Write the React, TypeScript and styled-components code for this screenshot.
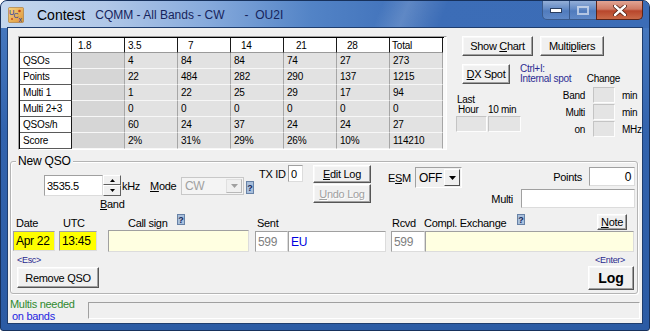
import React from 'react';
import styled, { createGlobalStyle } from 'styled-components';

const GlobalStyle = createGlobalStyle`
  html, body { margin: 0; padding: 0; background: #fff; }
  body { font-family: "Liberation Sans", Arial, sans-serif; }
`;

const Window = styled.div`
  width: 650px;
  height: 331px;
  box-sizing: border-box;
  display: flex;
  flex-direction: column;
  border: 1px solid #17315c;
  border-radius: 7px 7px 3px 3px;
  overflow: hidden;
  background: linear-gradient(180deg, #4a7cc2 0%, #3263ad 40%, #2b5ba4 100%);
  font-family: "Liberation Sans", Arial, sans-serif;
  letter-spacing: -0.3px;
  color: #000;
`;

const TitleBar = styled.div`
  height: 27px;
  flex: none;
  display: flex;
  align-items: center;
  padding-left: 7px;
  background:
    linear-gradient(112deg, transparent 58%, rgba(255,255,255,0.16) 62%, transparent 68%),
    linear-gradient(90deg, #c4d7ee 0%, #b1c8e8 16%, #86aadc 32%, #5283c6 48%, #3c6db7 66%, #3b6cb6 100%);
`;

const TitleMain = styled.span`
  margin-left: 13px;
  font-size: 14px;
  letter-spacing: 0;
  color: #000;
`;

const TitleSub = styled.span`
  margin-left: 10px;
  font-size: 12px;
  letter-spacing: 0;
  color: #16245c;
  white-space: pre;
`;

const Controls = styled.div`
  margin-left: auto;
  margin-right: 6px;
  align-self: flex-start;
  display: flex;
  height: 19px;
`;

const CtlBtn = styled.div<{ $w: number; $close?: boolean }>`
  width: ${p => p.$w}px;
  height: 19px;
  box-sizing: border-box;
  display: flex;
  align-items: center;
  justify-content: center;
  border: 1px solid ${p => (p.$close ? '#5b2418' : '#3a5a8c')};
  border-top: none;
  margin-left: -1px;
  border-radius: ${p => (p.$close ? '0 0 5px 0' : '0')};
  background: ${p =>
    p.$close
      ? 'linear-gradient(180deg, #e2a494 0%, #cf7a64 45%, #b8462c 55%, #c96a48 100%)'
      : 'linear-gradient(180deg, rgba(255,255,255,0.45) 0%, rgba(255,255,255,0.2) 45%, rgba(120,150,200,0.35) 55%, rgba(150,180,225,0.4) 100%)'};
  &:first-child { border-radius: 0 0 0 5px; }
`;

const Client = styled.div`
  flex: 1;
  margin: 0 7px 7px 7px;
  background: #f0f0f0;
  box-shadow: 0 0 0 1px #1e3d6e;
  display: flex;
  flex-direction: column;
`;

/* ---------- top: statistics grid + side panel ---------- */

const TopArea = styled.div`
  flex: none;
  height: 122px;
  box-sizing: border-box;
  padding: 8px 0 0 10px;
  display: flex;
`;

const GridFrame = styled.div`
  width: 429px;
  height: 114px;
  box-sizing: border-box;
  border: 1px solid;
  border-color: #a0a0a0 #fff #fff #a0a0a0;
  background: #fafafa;
`;

const Table = styled.div`
  display: grid;
  grid-template-columns: 52px repeat(7, 53px);
  grid-template-rows: 15px repeat(6, 16px);
  border-top: 1px solid #000;
  border-left: 1px solid #000;
  width: 424px;
  font-size: 10px;
  letter-spacing: -0.2px;
`;

type CellKind = 'head' | 'label' | 'data' | 'empty';

const Cell = styled.div<{ $kind: CellKind; $indent?: number }>`
  box-sizing: border-box;
  padding-left: ${p => p.$indent ?? 3}px;
  display: flex;
  align-items: center;
  white-space: pre;
  background: ${p =>
    p.$kind === 'head' || p.$kind === 'label' ? '#fff' : p.$kind === 'empty' ? '#d6d6d6' : '#e2e2e2'};
  border-right: 1px solid ${p => (p.$kind === 'head' || p.$kind === 'label' ? '#1a1a1a' : '#a6a6a6')};
  border-bottom: 1px solid ${p => (p.$kind === 'label' ? '#5a5a5a' : p.$kind === 'head' ? '#9a9a9a' : '#f7f7f7')};
`;

const SidePanel = styled.div`
  flex: 1;
  display: flex;
  flex-direction: column;
`;

const ButtonRow = styled.div`
  display: flex;
  gap: 7px;
  margin-left: 15px;
`;

const Btn = styled.div<{ $w: number; $h?: number; $bold?: boolean; $off?: boolean }>`
  width: ${p => p.$w}px;
  height: ${p => p.$h ?? 20}px;
  box-sizing: border-box;
  display: flex;
  align-items: center;
  justify-content: center;
  font-size: ${p => (p.$bold ? 14 : 11)}px;
  font-weight: ${p => (p.$bold ? 700 : 400)};
  letter-spacing: ${p => (p.$bold ? '0' : '-0.3px')};
  color: ${p => (p.$off ? '#a0a0a0' : '#000')};
  text-shadow: ${p => (p.$off ? '1px 1px #fff' : 'none')};
  background: #f0f0f0;
  border: 1px solid;
  border-color: #fff #555 #555 #fff;
  box-shadow: inset -1px -1px #a0a0a0, inset 1px 1px #f8f8f8;
  white-space: nowrap;
`;

const DxRow = styled.div`
  display: flex;
  height: 20px;
  margin: 8px 0 0 15px;
`;

const Hint = styled.div`
  margin-left: 10px;
  font-size: 10px;
  line-height: 10px;
  color: #2c2c92;
`;

const ChangeLabel = styled.div`
  margin-left: auto;
  margin-right: 22px;
  align-self: flex-end;
  font-size: 10px;
  line-height: 10px;
`;

const StatsArea = styled.div`
  display: flex;
  margin-top: 3px;
`;

const LastBlock = styled.div`
  display: flex;
  flex-direction: column;
  margin: 8px 0 0 9px;
  font-size: 10px;
  line-height: 10px;
`;

const LastCaption = styled.div<{ $w?: number; $pl?: number }>`
  width: ${p => (p.$w ? `${p.$w}px` : 'auto')};
  padding-left: ${p => p.$pl ?? 0}px;
  box-sizing: border-box;
`;

const CaptionRow = styled.div`
  display: flex;
`;

const BoxRow = styled.div`
  display: flex;
  gap: 1px;
  margin-top: 1px;
`;

const GreyBox = styled.div<{ $w: number }>`
  width: ${p => p.$w}px;
  height: 16px;
  box-sizing: border-box;
  background: #e4e4e4;
  border: 1px solid;
  border-color: #c4c4c4 #fdfdfd #fdfdfd #c4c4c4;
`;

const StatCol = styled.div`
  margin-left: auto;
  display: flex;
  flex-direction: column;
  gap: 1px;
`;

const StatRow = styled.div`
  display: flex;
  align-items: center;
  height: 16px;
  font-size: 10px;
`;

const StatLabel = styled.div`
  width: 38px;
  text-align: right;
`;

const StatUnit = styled.div`
  width: 20px;
  margin-left: 7px;
`;

/* ---------- New QSO group ---------- */

const Group = styled.div`
  position: relative;
  flex: none;
  height: 133px;
  box-sizing: border-box;
  margin: 11px 4px 0 2px;
  border: 1px solid #b4b4b4;
  border-radius: 3px;
  box-shadow: inset 1px 1px #fff, 1px 1px #fff;
  font-size: 11px;
`;

const Legend = styled.span`
  position: absolute;
  top: -8px;
  left: 5px;
  padding: 0 2px;
  background: #f0f0f0;
  font-size: 12px;
  line-height: 14px;
  letter-spacing: -0.2px;
`;

const RowA = styled.div`
  display: flex;
  align-items: flex-start;
  height: 44px;
  margin-top: 3px;
`;

const FreqBlock = styled.div`
  display: flex;
  flex-direction: column;
  margin: 10px 0 0 33px;
  width: 98px;
`;

const InlineGroup = styled.div<{ $ml: number; $mt: number; $h: number }>`
  display: flex;
  align-items: center;
  margin-left: ${p => p.$ml}px;
  margin-top: ${p => p.$mt}px;
  height: ${p => p.$h}px;
`;

const Text = styled.span<{ $w?: number; $ml?: number; $size?: number; $color?: string }>`
  display: inline-block;
  width: ${p => (p.$w ? `${p.$w}px` : 'auto')};
  margin-left: ${p => p.$ml ?? 0}px;
  font-size: ${p => p.$size ?? 11}px;
  color: ${p => p.$color ?? '#000'};
  white-space: nowrap;
`;

const Field = styled.div<{
  $w: number; $h?: number; $ml?: number; $mt?: number;
  $bg?: string; $color?: string; $size?: number; $right?: boolean;
}>`
  width: ${p => p.$w}px;
  height: ${p => p.$h ?? 21}px;
  margin-left: ${p => p.$ml ?? 0}px;
  margin-top: ${p => p.$mt ?? 0}px;
  box-sizing: border-box;
  flex: none;
  display: flex;
  align-items: center;
  justify-content: ${p => (p.$right ? 'flex-end' : 'flex-start')};
  padding: 0 3px 0 2px;
  background: ${p => p.$bg ?? '#fff'};
  color: ${p => p.$color ?? '#000'};
  font-size: ${p => p.$size ?? 12}px;
  border: 1px solid;
  border-color: #a0a0a0 #dcdcdc #dcdcdc #a0a0a0;
  white-space: nowrap;
`;

const Spin = styled.div`
  display: flex;
  flex-direction: column;
  width: 18px;
  height: 21px;
`;

const SpinBtn = styled.div<{ $h: number }>`
  height: ${p => p.$h}px;
  box-sizing: border-box;
  display: flex;
  align-items: center;
  justify-content: center;
  background: #f0f0f0;
  border: 1px solid;
  border-color: #fff #606060 #606060 #fff;
`;

const BandLabel = styled.span`
  margin: 2px 0 0 56px;
  line-height: 12px;
  font-size: 11px;
`;

const Combo = styled.div<{ $w: number; $h: number; $off?: boolean }>`
  width: ${p => p.$w}px;
  height: ${p => p.$h}px;
  box-sizing: border-box;
  display: flex;
  padding: 1px;
  background: ${p => (p.$off ? '#f4f4f4' : '#f0f0f0')};
  border: 1px solid;
  border-color: ${p => (p.$off ? '#c8c8c8' : '#a0a0a0 #fff #fff #a0a0a0')};
`;

const ComboText = styled.div<{ $off?: boolean }>`
  flex: 1;
  display: flex;
  align-items: center;
  padding-left: 2px;
  font-size: 12px;
  color: ${p => (p.$off ? '#a0a0a0' : '#000')};
`;

const ComboBtn = styled.div<{ $off?: boolean }>`
  width: 16px;
  box-sizing: border-box;
  display: flex;
  align-items: center;
  justify-content: center;
  background: #f0f0f0;
  border: 1px solid;
  border-color: ${p => (p.$off ? '#e0e0e0 #b8b8b8 #b8b8b8 #e0e0e0' : '#fff #505050 #505050 #fff')};
`;

const Help = styled.span<{ $w: number; $h: number; $mt?: number }>`
  display: inline-flex;
  align-items: center;
  justify-content: center;
  width: ${p => p.$w}px;
  height: ${p => p.$h}px;
  margin-top: ${p => p.$mt ?? 0}px;
  box-sizing: border-box;
  align-self: flex-start;
  background: #a8bfdc;
  border: 1px solid #6882a6;
  color: #17285a;
  font-size: 9px;
  font-weight: 700;
  letter-spacing: 0;
`;

const BtnCol = styled.div`
  display: flex;
  flex-direction: column;
  gap: 1px;
  margin-left: 10px;
`;

const RightBlock = styled.div`
  margin: 2px 2px 0 auto;
  display: flex;
  flex-direction: column;
  align-items: flex-end;
  gap: 3px;
`;

const PairRow = styled.div`
  display: flex;
  align-items: center;
`;

const RowB = styled.div`
  display: flex;
  align-items: flex-end;
  height: 17px;
  margin-top: 4px;
  line-height: 14px;
`;

const RowC = styled.div`
  display: flex;
  align-items: flex-start;
  height: 22px;
`;

const RowD = styled.div`
  display: flex;
  height: 35px;
  margin-top: 3px;
`;

const ActionCol = styled.div<{ $ml?: number; $right?: boolean }>`
  display: flex;
  flex-direction: column;
  align-items: ${p => (p.$right ? 'flex-end' : 'flex-start')};
  margin-left: ${p => (p.$right ? 'auto' : `${p.$ml ?? 0}px`)};
  margin-right: ${p => (p.$right ? 3 : 0)}px;
`;

const KeyHint = styled.span<{ $mr?: number }>`
  font-size: 9px;
  line-height: 10px;
  color: #2a2a8e;
  margin-right: ${p => p.$mr ?? 0}px;
`;

/* ---------- bottom strip ---------- */

const BottomStrip = styled.div`
  flex: 1;
  display: flex;
  padding-left: 2px;
`;

const NeedText = styled.div`
  width: 78px;
  margin-top: 4px;
  font-size: 11px;
  line-height: 12px;
`;

const NeedLine = styled.div<{ $color: string; $pl?: number }>`
  color: ${p => p.$color};
  padding-left: ${p => p.$pl ?? 0}px;
  white-space: nowrap;
`;

const StatusBox = styled.div`
  flex: 1;
  height: 17px;
  margin: 8px 2px 0 0;
  box-sizing: border-box;
  border: 1px solid;
  border-color: #a0a0a0 #fff #fff #a0a0a0;
`;

/* ---------- small drawings ---------- */

const Arrow = ({ up, color = '#000', size = 3 }: { up?: boolean; color?: string; size?: number }) => (
  <svg width={size * 2 + 1} height={size + 1} viewBox={`0 0 ${size * 2 + 1} ${size + 1}`}>
    <polygon
      points={up ? `0,${size + 1} ${size * 2 + 1},${size + 1} ${size + 0.5},0` : `0,0 ${size * 2 + 1},0 ${size + 0.5},${size + 1}`}
      fill={color}
    />
  </svg>
);

const AppIcon = () => (
  <svg width="16" height="16" viewBox="0 0 16 16">
    <defs>
      <linearGradient id="ico" x1="0" y1="0" x2="1" y2="1">
        <stop offset="0" stopColor="#f6d27e" />
        <stop offset="1" stopColor="#df9438" />
      </linearGradient>
    </defs>
    <rect x="0.5" y="0.5" width="15" height="15" rx="1" fill="url(#ico)" stroke="#a8742e" strokeWidth="0.6" />
    <circle cx="11.5" cy="4" r="1.3" fill="#c4461c" />
    <circle cx="4" cy="12" r="1" fill="#c4461c" />
    <text x="1" y="7.5" fontSize="7.5" fontFamily="Liberation Sans" fill="#2336a8">U</text>
    <text x="5.5" y="11" fontSize="7" fontFamily="Liberation Sans" fill="#2336a8">C</text>
    <text x="10.5" y="15" fontSize="7" fontFamily="Liberation Sans" fill="#2336a8">x</text>
  </svg>
);

const headers: [string, number][] = [
  ['', 3], ['1.8', 6], ['3.5', 3], ['7', 10], ['14', 10], ['21', 12], ['28', 10], ['Total', 2],
];

const rows: string[][] = [
  ['QSOs', '', '4', '84', '84', '74', '27', '273'],
  ['Points', '', '22', '484', '282', '290', '137', '1215'],
  ['Multi 1', '', '1', '22', '25', '29', '17', '94'],
  ['Multi 2+3', '', '0', '0', '0', '0', '0', '0'],
  ['QSOs/h', '', '60', '24', '37', '24', '24', '27'],
  ['Score', '', '2%', '31%', '29%', '26%', '10%', '114210'],
];

export default function App() {
  return (
    <>
      <GlobalStyle />
      <Window>
        <TitleBar>
          <AppIcon />
          <TitleMain>Contest</TitleMain>
          <TitleSub>{'CQMM - All Bands - CW      -  OU2I'}</TitleSub>
          <Controls>
            <CtlBtn $w={28}>
              <svg width="12" height="5"><rect x="0.5" y="0.5" width="11" height="4" fill="#fff" stroke="#2a3e60" strokeWidth="1" /></svg>
            </CtlBtn>
            <CtlBtn $w={28}>
              <svg width="12" height="9"><rect x="1" y="1" width="10" height="7" fill="none" stroke="rgba(255,255,255,0.55)" strokeWidth="2" /></svg>
            </CtlBtn>
            <CtlBtn $w={47} $close>
              <svg width="14" height="11" viewBox="0 0 14 11">
                <path d="M2 1 L12 10 M12 1 L2 10" stroke="#4a1a10" strokeWidth="4" strokeLinecap="round" />
                <path d="M2 1 L12 10 M12 1 L2 10" stroke="#fff" strokeWidth="2.4" strokeLinecap="round" />
              </svg>
            </CtlBtn>
          </Controls>
        </TitleBar>

        <Client>
          <TopArea>
            <GridFrame>
              <Table>
                {headers.map(([h, ind], i) => (
                  <Cell key={`h${i}`} $kind="head" $indent={ind}>{h}</Cell>
                ))}
                {rows.map(r =>
                  r.map((v, i) => (
                    <Cell
                      key={`${r[0]}-${i}`}
                      $kind={i === 0 ? 'label' : i === 1 ? 'empty' : 'data'}
                    >
                      {v}
                    </Cell>
                  ))
                )}
              </Table>
            </GridFrame>

            <SidePanel>
              <ButtonRow>
                <Btn $w={71}>Show&nbsp;<u>C</u>hart</Btn>
                <Btn $w={64}>Multi<u>p</u>liers</Btn>
              </ButtonRow>
              <DxRow>
                <Btn $w={48}><u>D</u>X Spot</Btn>
                <Hint>
                  Ctrl+I:
                  <br />
                  Internal spot
                </Hint>
                <ChangeLabel>Change</ChangeLabel>
              </DxRow>
              <StatsArea>
                <LastBlock>
                  <LastCaption $pl={1}>Last</LastCaption>
                  <CaptionRow>
                    <LastCaption $w={32} $pl={2}>Hour</LastCaption>
                    <LastCaption>10 min</LastCaption>
                  </CaptionRow>
                  <BoxRow>
                    <GreyBox $w={31} />
                    <GreyBox $w={33} />
                  </BoxRow>
                </LastBlock>
                <StatCol>
                  <StatRow>
                    <StatLabel>Band</StatLabel>
                    <GreyBox $w={22} style={{ marginLeft: 8 }} />
                    <StatUnit>min</StatUnit>
                  </StatRow>
                  <StatRow>
                    <StatLabel>Multi</StatLabel>
                    <GreyBox $w={22} style={{ marginLeft: 8 }} />
                    <StatUnit>min</StatUnit>
                  </StatRow>
                  <StatRow>
                    <StatLabel>on</StatLabel>
                    <GreyBox $w={22} style={{ marginLeft: 8 }} />
                    <StatUnit>MHz</StatUnit>
                  </StatRow>
                </StatCol>
              </StatsArea>
            </SidePanel>
          </TopArea>

          <Group>
            <Legend>New QSO</Legend>

            <RowA>
              <FreqBlock>
                <InlineGroup $ml={0} $mt={0} $h={21}>
                  <Field $w={59} $size={11}>3535.5</Field>
                  <Spin>
                    <SpinBtn $h={10}><Arrow up size={2} /></SpinBtn>
                    <SpinBtn $h={11}><Arrow size={2} /></SpinBtn>
                  </Spin>
                  <Text $ml={1} $w={20}>kHz</Text>
                </InlineGroup>
                <BandLabel><u>B</u>and</BandLabel>
              </FreqBlock>

              <InlineGroup $ml={8} $mt={12} $h={18}>
                <Text $w={28}><u>M</u>ode</Text>
                <Combo $w={63} $h={18} $off style={{ marginLeft: 3 }}>
                  <ComboText $off>CW</ComboText>
                  <ComboBtn $off><Arrow color="#a0a0a0" /></ComboBtn>
                </Combo>
                <Help $w={8} $h={13} $mt={4} style={{ marginLeft: 2 }}>?</Help>
              </InlineGroup>

              <InlineGroup $ml={5} $mt={0} $h={17}>
                <Text $w={27}>TX ID</Text>
                <Field $w={15} $h={17} $ml={2} $size={11}>0</Field>
              </InlineGroup>

              <BtnCol>
                <Btn $w={58} $h={18}><u>E</u>dit Log</Btn>
                <Btn $w={58} $h={19} $off><u>U</u>ndo Log</Btn>
              </BtnCol>

              <InlineGroup $ml={17} $mt={2} $h={21}>
                <Text $w={24}>E<u>S</u>M</Text>
                <Combo $w={47} $h={21} style={{ marginLeft: 3 }}>
                  <ComboText>OFF</ComboText>
                  <ComboBtn><Arrow /></ComboBtn>
                </Combo>
              </InlineGroup>

              <RightBlock>
                <PairRow>
                  <Text>Points</Text>
                  <Field $w={46} $h={19} $ml={7} $right>0</Field>
                </PairRow>
                <PairRow>
                  <Text>Multi</Text>
                  <Field $w={114} $h={19} $ml={8} />
                </PairRow>
              </RightBlock>
            </RowA>

            <RowB>
              <Text $ml={5} $w={47}>Date</Text>
              <Text $w={65}>UTC</Text>
              <Text $w={49}>Call sign</Text>
              <Help $w={8} $h={11} $mt={1}>?</Help>
              <Text $ml={72} $w={135}>Sent</Text>
              <Text $w={32}>Rcvd</Text>
              <Text $w={93}>Compl. Exchange</Text>
              <Help $w={8} $h={11} $mt={1}>?</Help>
              <Btn $w={30} $h={16} style={{ marginLeft: 72, alignSelf: 'flex-start', marginTop: 1 }}><u>N</u>ote</Btn>
            </RowB>

            <RowC>
              <Field $w={42} $h={20} $ml={2} $mt={1} $bg="#ffff00">Apr 22</Field>
              <Field $w={38} $h={20} $ml={4} $mt={1} $bg="#ffff00">13:45</Field>
              <Field $w={141} $h={22} $ml={11} $bg="#ffffe1" />
              <Field $w={33} $h={21} $ml={6} $mt={1} $color="#808080">599</Field>
              <Field $w={98} $h={21} $mt={1} $color="#0000e0">EU</Field>
              <Field $w={34} $h={21} $ml={5} $mt={1} $color="#808080">599</Field>
              <Field $w={209} $h={21} $mt={1} $bg="#ffffe1" />
            </RowC>

            <RowD>
              <ActionCol $ml={6}>
                <KeyHint>{'<Esc>'}</KeyHint>
                <Btn $w={82} $h={21} style={{ marginTop: 2 }}>Remove QSO</Btn>
              </ActionCol>
              <ActionCol $right>
                <KeyHint $mr={9}>{'<Enter>'}</KeyHint>
                <Btn $w={46} $h={24} $bold style={{ marginTop: 1 }}>Log</Btn>
              </ActionCol>
            </RowD>
          </Group>

          <BottomStrip>
            <NeedText>
              <NeedLine $color="#2f8a2f">Multis needed</NeedLine>
              <NeedLine $color="#1f1fe0" $pl={2}>on bands</NeedLine>
            </NeedText>
            <StatusBox />
          </BottomStrip>
        </Client>
      </Window>
    </>
  );
}
